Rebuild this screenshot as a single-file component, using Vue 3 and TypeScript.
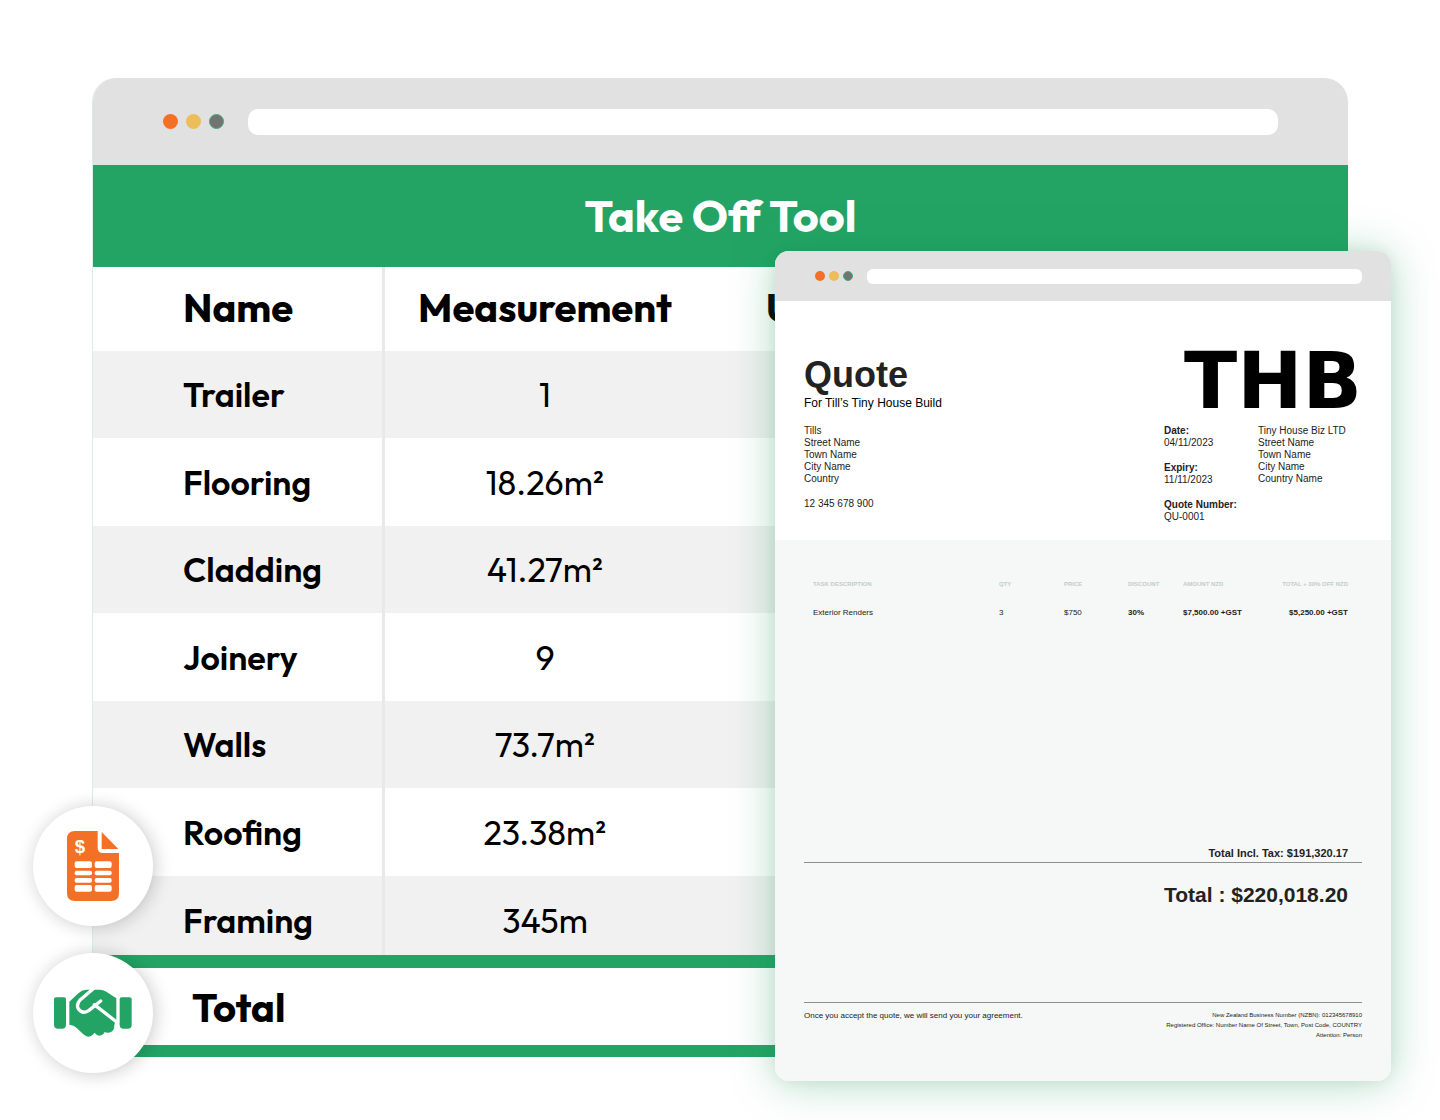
<script setup lang="ts">
interface Measure {
  name: string
  value: string
}

const measures: Measure[] = [
  { name: 'Trailer', value: '1' },
  { name: 'Flooring', value: '18.26m²' },
  { name: 'Cladding', value: '41.27m²' },
  { name: 'Joinery', value: '9' },
  { name: 'Walls', value: '73.7m²' },
  { name: 'Roofing', value: '23.38m²' },
  { name: 'Framing', value: '345m' },
]

const cellRows = [
  { y: 244, h: 20 },
  { y: 272, h: 14 },
  { y: 294, h: 14 },
  { y: 315, h: 20 },
]
</script>

<template>
  <main class="stage">
    <section class="window">
      <header class="chrome">
        <span class="dots"><i class="dot orange"></i><i class="dot yellow"></i><i class="dot grey"></i></span>
        <input class="address" type="text" aria-label="Address" />
      </header>
      <h1 class="title">Take Off Tool</h1>
      <table class="takeoff">
        <colgroup>
          <col class="col-name" />
          <col class="col-measure" />
          <col />
        </colgroup>
        <thead>
          <tr>
            <th scope="col" class="name">Name</th>
            <th scope="col" class="measure">Measurement</th>
            <th scope="col" class="unit">Unit</th>
          </tr>
        </thead>
        <tbody>
          <tr v-for="m in measures" :key="m.name">
            <th scope="row" class="name">{{ m.name }}</th>
            <td class="measure">{{ m.value }}</td>
            <td></td>
          </tr>
        </tbody>
        <tfoot>
          <tr>
            <th scope="row" colspan="3">Total</th>
          </tr>
        </tfoot>
      </table>
    </section>

    <article class="quote">
      <header class="chrome small">
        <span class="dots"><i class="dot orange"></i><i class="dot yellow"></i><i class="dot grey"></i></span>
        <input class="address" type="text" aria-label="Quote address" />
      </header>

      <div class="quote-head">
        <div class="heading">
          <div>
            <h2>Quote</h2>
            <p class="subtitle">For Till’s Tiny House Build</p>
          </div>
          <strong class="brand">THB</strong>
        </div>
        <div class="parties">
          <address class="client">
            <p>Tills<br />Street Name<br />Town Name<br />City Name<br />Country</p>
            <p>12 345 678 900</p>
          </address>
          <dl class="dates">
            <div><dt>Date:</dt><dd>04/11/2023</dd></div>
            <div><dt>Expiry:</dt><dd>11/11/2023</dd></div>
            <div><dt>Quote Number:</dt><dd>QU-0001</dd></div>
          </dl>
          <address class="company">
            <p>Tiny House Biz LTD<br />Street Name<br />Town Name<br />City Name<br />Country Name</p>
          </address>
        </div>
      </div>

      <div class="quote-body">
        <table class="items">
          <colgroup>
            <col class="c-task" />
            <col class="c-qty" />
            <col class="c-price" />
            <col class="c-discount" />
            <col class="c-amount" />
            <col />
          </colgroup>
          <thead>
            <tr>
              <th scope="col">TASK DESCRIPTION</th>
              <th scope="col">QTY</th>
              <th scope="col">PRICE</th>
              <th scope="col">DISCOUNT</th>
              <th scope="col">AMOUNT NZD</th>
              <th scope="col" class="end">TOTAL + 30% OFF NZD</th>
            </tr>
          </thead>
          <tbody>
            <tr>
              <td>Exterior Renders</td>
              <td>3</td>
              <td>$750</td>
              <td class="bold">30%</td>
              <td class="bold">$7,500.00 +GST</td>
              <td class="bold end">$5,250.00 +GST</td>
            </tr>
          </tbody>
        </table>

        <div class="totals">
          <p class="incl">Total Incl. Tax: $191,320.17</p>
          <p class="grand">Total : $220,018.20</p>
        </div>

        <footer class="foot">
          <p class="note">Once you accept the quote, we will send you your agreement.</p>
          <p class="legal">
            New Zealand Business Number (NZBN): 012345678910<br />
            Registered Office: Number Name Of Street, Town, Post Code, COUNTRY<br />
            Attention: Person
          </p>
        </footer>
      </div>
    </article>

    <div class="badges">
      <span class="badge">
        <svg width="52" height="70" viewBox="202 153 156 210" role="img" aria-label="Invoice">
          <path fill="#f27127" d="M226 153H294V203Q294 219 310 219H358V339Q358 363 334 363H226Q202 363 202 339V177Q202 153 226 153Z" />
          <path fill="#f27127" d="M306 156L356 207H306Z" />
          <text x="241" y="219" text-anchor="middle" class="dollar">$</text>
          <g fill="#fff">
            <template v-for="r in cellRows" :key="r.y">
              <rect x="225" :y="r.y" width="52" :height="r.h" rx="6" />
              <rect x="285" :y="r.y" width="51" :height="r.h" rx="6" />
            </template>
          </g>
        </svg>
      </span>
      <span class="badge">
        <svg width="78" height="48" viewBox="164 628 234 144" role="img" aria-label="Agreement">
          <g fill="#23a465">
            <path d="M170 653H194Q200 653 200 659V735Q200 747 188 747H176Q164 747 164 735V659Q164 653 170 653Z" />
            <path d="M367 653H391Q397 653 397 659V735Q397 747 385 747H373Q361 747 361 735V659Q361 653 367 653Z" />
            <path d="M210 666L238 640Q249 630 262 630H300Q312 630 321 636L351 656V722Q344 728 345 740Q344 757 328 759Q321 760 316 757Q311 767 301 768Q291 767 286 759Q276 771 266 771Q258 770 252 764L232 745Q224 736 210 735Z" />
          </g>
          <g fill="none" stroke="#fff" stroke-width="10" stroke-linecap="round" stroke-linejoin="round">
            <path d="M281 628L243 660Q229 675 238 689Q249 704 268 693L304 664" />
            <path d="M285 675L352 727" />
          </g>
        </svg>
      </span>
    </div>
  </main>
</template>

<style>
body {
  margin: 0;
  background: #fff;
}
</style>

<style scoped>
.stage {
  position: relative;
  box-sizing: border-box;
  min-height: 100vh;
  padding: 78px 92px 64px;
  overflow: hidden;
  color: #000;
  font-family: Outfit, Lato, sans-serif;
}

h1,
h2,
p,
dl,
dd {
  margin: 0;
}

.window {
  border-left: 1px solid #d6f0e4;
  border-radius: 24px 24px 0 0;
  overflow: hidden;
}

.chrome {
  display: flex;
  align-items: center;
  gap: 24px;
  box-sizing: border-box;
  height: 87px;
  padding: 0 70px;
  background: #e1e1e1;
}

.dots {
  display: flex;
  gap: 8px;
}

.dot {
  width: 15px;
  height: 15px;
  border-radius: 50%;
}

.orange {
  background: #f27127;
}

.yellow {
  background: #edbd5c;
}

.grey {
  box-sizing: border-box;
  border: 1px solid #3fae77;
  background: #737373;
}

.address {
  flex: 1;
  min-width: 0;
  box-sizing: border-box;
  height: 26px;
  padding: 0 10px;
  border: 0;
  border-radius: 10px;
  background: #fff;
}

.title {
  background: #23a465;
  color: #fff;
  font-size: 45px;
  font-weight: 700;
  line-height: 102px;
  text-align: center;
}

.takeoff {
  width: 100%;
  table-layout: fixed;
  border-collapse: separate;
  border-spacing: 0;
}

.takeoff th,
.takeoff td {
  box-sizing: border-box;
  padding: 0;
}

.col-name {
  width: 292px;
}

.col-measure {
  width: 320px;
}

.takeoff .name {
  padding-left: 90px;
  border-right: 3px solid #e8eaea;
  text-align: left;
}

.takeoff .measure {
  text-align: center;
}

.takeoff .unit {
  padding-left: 61px;
  text-align: left;
}

.takeoff thead th {
  height: 84px;
  padding-bottom: 4px;
  font-size: 40px;
  font-weight: 700;
}

.takeoff tbody tr {
  height: 87px;
  font-size: 34px;
}

.takeoff tbody tr:nth-child(even) {
  height: 88px;
}

.takeoff tbody tr:last-child {
  height: 79px;
}

.takeoff tbody tr:last-child > * {
  padding-top: 10px;
}

.takeoff tbody tr:nth-child(odd) {
  background: #f1f1f1;
}

.takeoff tbody th {
  font-weight: 600;
}

.takeoff tfoot th {
  height: 102px;
  padding-left: 99px;
  border-top: 13px solid #23a465;
  border-bottom: 12px solid #23a465;
  font-size: 40px;
  font-weight: 700;
  text-align: left;
}

.quote {
  position: absolute;
  top: 251px;
  right: 49px;
  width: 616px;
  border-radius: 14px;
  background: #fff;
  box-shadow: 0 2px 44px rgba(20, 150, 90, 0.34), 0 0 14px rgba(0, 40, 20, 0.06);
  color: #222;
  font-family: "Liberation Sans", Arial, sans-serif;
  overflow: hidden;
}

.small {
  gap: 14px;
  height: 50px;
  padding: 0 29px 0 40px;
}

.small .dots {
  gap: 4px;
}

.small .dot {
  width: 10px;
  height: 10px;
}

.small .address {
  height: 15px;
  border-radius: 6px;
}

.quote-head {
  box-sizing: border-box;
  height: 239px;
  padding: 41px 29px 0;
}

.heading {
  display: flex;
  justify-content: space-between;
  height: 83px;
}

h2 {
  margin-top: 12px;
  font-size: 36px;
  line-height: 42px;
}

.subtitle {
  color: #000;
  font-size: 12px;
  line-height: 14px;
}

.brand {
  color: #000;
  font-family: "DejaVu Sans", sans-serif;
  font-size: 78px;
  font-weight: 700;
  line-height: 78px;
}

.parties {
  display: flex;
  font-size: 10px;
  font-style: normal;
  line-height: 12px;
}

address {
  font-style: normal;
}

.client {
  flex: 1;
}

.client,
.dates {
  display: flex;
  flex-direction: column;
  gap: 13px;
}

.dates {
  width: 94px;
}

dt {
  font-weight: 700;
}

.company {
  width: 104px;
}

.quote-body {
  box-sizing: border-box;
  height: 541px;
  padding: 37px 29px 0;
  background: #f6f8f7;
}

.items {
  width: 100%;
  table-layout: fixed;
  border-collapse: collapse;
  font-size: 8px;
}

.items th,
.items td {
  padding: 0;
  text-align: left;
  white-space: nowrap;
}

.items th {
  height: 14px;
  color: #c4cbc9;
  font-size: 6px;
}

.items td {
  height: 43px;
}

.items th:first-child,
.items td:first-child {
  padding-left: 9px;
}

.items .end {
  padding-right: 14px;
  text-align: right;
}

.bold {
  font-weight: 700;
}

.c-task {
  width: 195px;
}

.c-qty {
  width: 65px;
}

.c-price {
  width: 64px;
}

.c-discount {
  width: 55px;
}

.c-amount {
  width: 80px;
}

.totals {
  margin-top: 212px;
  font-weight: 700;
  text-align: right;
}

.incl {
  padding: 0 14px 2px;
  border-bottom: 1px solid #8b8f8e;
  font-size: 11px;
  line-height: 14px;
}

.grand {
  padding: 20px 14px 0;
  font-size: 21px;
  line-height: 24px;
}

.foot {
  display: flex;
  justify-content: space-between;
  margin-top: 95px;
  padding-top: 7px;
  border-top: 1px solid #8b8f8e;
}

.note {
  font-size: 8px;
  line-height: 12px;
}

.legal {
  font-size: 6px;
  line-height: 10px;
  text-align: right;
}

.badges {
  position: absolute;
  top: 806px;
  left: 33px;
  display: flex;
  flex-direction: column;
  gap: 27px;
}

.badge {
  display: flex;
  align-items: center;
  justify-content: center;
  width: 120px;
  height: 120px;
  border-radius: 50%;
  background: #fff;
  box-shadow: 2px 1px 18px rgba(0, 20, 10, 0.22);
}

.dollar {
  fill: #fff;
  font-family: "Liberation Sans", Arial, sans-serif;
  font-size: 56px;
  font-weight: 700;
}
</style>
